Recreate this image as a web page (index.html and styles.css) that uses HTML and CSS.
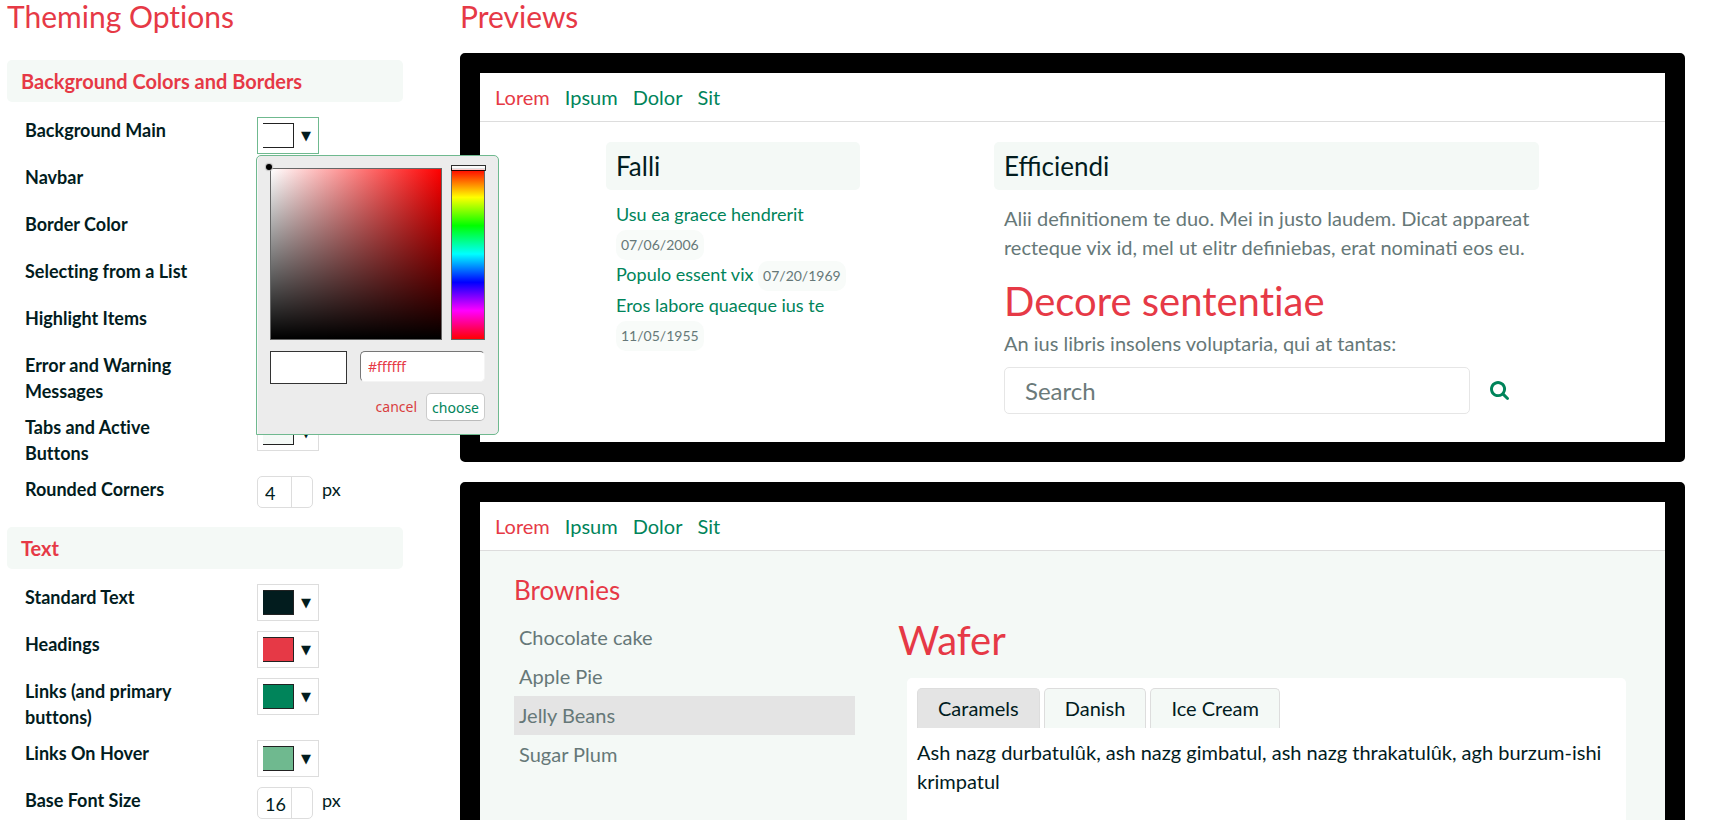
FILE: index.html
```html
<!DOCTYPE html>
<html lang="en">
<head>
<meta charset="utf-8">
<title>Theming Options</title>
<link rel="stylesheet" href="styles.css">
</head>
<body>
<main class="page">
  <section class="options">
    <h1 class="page-title">Theming Options</h1>

    <h2 class="group-title">Background Colors and Borders</h2>
    <div class="group">
      <div class="row">
        <label class="row-label" for="bg-main">Background Main</label>
        <div class="control">
          <button class="swatch is-open" id="bg-main" type="button"><span class="chip chip-white"></span><span class="arrow">▼</span></button>
          <div class="picker">
            <div class="picker-top">
              <div class="shade"><span class="shade-dot"></span></div>
              <div class="hue"><input class="hue-range" type="range" min="0" max="360" value="0" aria-label="Hue"></div>
            </div>
            <div class="picker-values">
              <span class="initial"></span>
              <input class="hex" type="text" value="#ffffff" aria-label="Hex color">
            </div>
            <div class="picker-actions">
              <a class="cancel" href="#">cancel</a>
              <button class="choose" type="button">choose</button>
            </div>
          </div>
        </div>
      </div>
      <div class="row">
        <label class="row-label" for="navbar">Navbar</label>
        <div class="control"><button class="swatch" id="navbar" type="button"><span class="chip chip-white"></span><span class="arrow">▼</span></button></div>
      </div>
      <div class="row">
        <label class="row-label" for="border-color">Border Color</label>
        <div class="control"><button class="swatch" id="border-color" type="button"><span class="chip chip-border"></span><span class="arrow">▼</span></button></div>
      </div>
      <div class="row">
        <label class="row-label" for="selecting">Selecting from a List</label>
        <div class="control"><button class="swatch" id="selecting" type="button"><span class="chip chip-select"></span><span class="arrow">▼</span></button></div>
      </div>
      <div class="row">
        <label class="row-label" for="highlight">Highlight Items</label>
        <div class="control"><button class="swatch" id="highlight" type="button"><span class="chip chip-mint"></span><span class="arrow">▼</span></button></div>
      </div>
      <div class="row">
        <label class="row-label" for="errors">Error and Warning Messages</label>
        <div class="control"><button class="swatch" id="errors" type="button"><span class="chip chip-mint"></span><span class="arrow">▼</span></button></div>
      </div>
      <div class="row">
        <label class="row-label" for="tabs">Tabs and Active Buttons</label>
        <div class="control"><button class="swatch" id="tabs" type="button"><span class="chip chip-mint"></span><span class="arrow">▼</span></button></div>
      </div>
      <div class="row">
        <label class="row-label" for="corners">Rounded Corners</label>
        <div class="control">
          <span class="spinner"><input class="spinner-input" id="corners" type="number" value="4"><span class="spinner-buttons"></span></span>
          <span class="unit">px</span>
        </div>
      </div>
    </div>

    <h2 class="group-title">Text</h2>
    <div class="group">
      <div class="row">
        <label class="row-label" for="text-color">Standard Text</label>
        <div class="control"><button class="swatch" id="text-color" type="button"><span class="chip chip-text"></span><span class="arrow">▼</span></button></div>
      </div>
      <div class="row">
        <label class="row-label" for="headings">Headings</label>
        <div class="control"><button class="swatch" id="headings" type="button"><span class="chip chip-heading"></span><span class="arrow">▼</span></button></div>
      </div>
      <div class="row">
        <label class="row-label" for="links">Links (and primary buttons)</label>
        <div class="control"><button class="swatch" id="links" type="button"><span class="chip chip-link"></span><span class="arrow">▼</span></button></div>
      </div>
      <div class="row">
        <label class="row-label" for="links-hover">Links On Hover</label>
        <div class="control"><button class="swatch" id="links-hover" type="button"><span class="chip chip-hover"></span><span class="arrow">▼</span></button></div>
      </div>
      <div class="row">
        <label class="row-label" for="font-size">Base Font Size</label>
        <div class="control">
          <span class="spinner"><input class="spinner-input" id="font-size" type="number" value="16"><span class="spinner-buttons"></span></span>
          <span class="unit">px</span>
        </div>
      </div>
    </div>
  </section>

  <section class="previews">
    <h1 class="page-title">Previews</h1>

    <article class="preview">
      <nav class="nav">
        <a class="nav-link is-active" href="#">Lorem</a>
        <a class="nav-link" href="#">Ipsum</a>
        <a class="nav-link" href="#">Dolor</a>
        <a class="nav-link" href="#">Sit</a>
      </nav>
      <div class="news">
        <div>
          <h3 class="box-title">Falli</h3>
          <ul class="events">
            <li><a class="event-link" href="#">Usu ea graece hendrerit</a> <span class="badge">07/06/2006</span></li>
            <li><a class="event-link" href="#">Populo essent vix</a> <span class="badge">07/20/1969</span></li>
            <li><a class="event-link" href="#">Eros labore quaeque ius te</a> <span class="badge">11/05/1955</span></li>
          </ul>
        </div>
        <div>
          <h3 class="box-title">Efficiendi</h3>
          <div class="story">
            <p class="copy">Alii definitionem te duo. Mei in justo laudem. Dicat appareat recteque vix id, mel ut elitr definiebas, erat nominati eos eu.</p>
            <h2 class="headline">Decore sententiae</h2>
            <p class="copy">An ius libris insolens voluptaria, qui at tantas:</p>
            <form class="search">
              <input class="search-input" type="text" placeholder="Search" aria-label="Search">
              <button class="search-button" type="button" aria-label="Search">
                <svg class="search-icon" viewBox="0 0 1664 1664" aria-hidden="true"><path fill="currentColor" d="M1152 704q0-185-131.500-316.500T704 256 387.500 387.500 256 704t131.500 316.500T704 1152t316.500-131.500T1152 704zm512 832q0 52-38 90t-90 38q-54 0-90-38l-343-342q-179 124-399 124-143 0-273.500-55.500t-225-150-150-225T0 704t55.500-273.500 150-225 225-150T704 0t273.500 55.500 225 150 150 225T1408 704q0 220-124 399l343 343q37 37 37 90z"/></svg>
              </button>
            </form>
          </div>
        </div>
      </div>
    </article>

    <article class="preview preview-tinted">
      <nav class="nav">
        <a class="nav-link is-active" href="#">Lorem</a>
        <a class="nav-link" href="#">Ipsum</a>
        <a class="nav-link" href="#">Dolor</a>
        <a class="nav-link" href="#">Sit</a>
      </nav>
      <div class="sweets">
        <div>
          <h3 class="list-title">Brownies</h3>
          <ul class="list">
            <li class="list-item">Chocolate cake</li>
            <li class="list-item">Apple Pie</li>
            <li class="list-item is-selected">Jelly Beans</li>
            <li class="list-item">Sugar Plum</li>
          </ul>
        </div>
        <div class="detail">
          <h2 class="headline">Wafer</h2>
          <div class="card">
            <div class="tabs">
              <button class="tab is-selected" type="button">Caramels</button>
              <button class="tab" type="button">Danish</button>
              <button class="tab" type="button">Ice Cream</button>
            </div>
            <p class="card-copy">Ash nazg durbatulûk, ash nazg gimbatul, ash nazg thrakatulûk, agh burzum-ishi krimpatul</p>
          </div>
        </div>
      </div>
    </article>
  </section>
</main>
</body>
</html>
```

FILE: styles.css
```css
:root {
  --text: #021c1e;
  --heading: #e63946;
  --link: #00845a;
  --hover: #6fb98f;
  --muted: #667878;
  --mint: #f4f9f6;
  --border: #dddddd;
  --selected: #e4e4e4;
}

* { box-sizing: border-box; }

body {
  margin: 0;
  background: #fff;
  color: var(--text);
  font-family: Lato, sans-serif;
  font-size: 20px;
  line-height: 29px;
}

h1, h2, h3, p, ul { margin: 0; padding: 0; font-weight: 400; }
ul { list-style: none; }
a { color: var(--link); text-decoration: none; }
button, input { font-family: inherit; color: inherit; margin: 0; }

.page {
  display: grid;
  grid-template-columns: 396px minmax(0, 1fr);
  column-gap: 57px;
  padding: 0 37px 0 7px;
}

.page-title {
  color: var(--heading);
  font-size: 30px;
  line-height: 32px;
}

/* Options column */
.options { font-variant-ligatures: no-common-ligatures; }
.options .page-title { margin-bottom: 28px; }

.group-title {
  padding: 6px 14px;
  border-radius: 5px;
  background: var(--mint);
  color: var(--heading);
  font-size: 20px;
  font-weight: 700;
  line-height: 30px;
}

.group { padding: 15px 0 9px 18px; }

.row {
  display: grid;
  grid-template-columns: 171px 1fr;
  column-gap: 61px;
  align-items: start;
  padding-bottom: 10px;
}

.row-label {
  font-size: 18px;
  font-weight: 700;
  line-height: 26px;
}

.control {
  position: relative;
  display: flex;
  gap: 9px;
}

.swatch {
  display: flex;
  align-items: center;
  gap: 7px;
  width: 62px;
  height: 37px;
  padding: 0 5px;
  border: 1px solid var(--border);
  background: #fff;
}
.swatch.is-open { border-color: var(--hover); }

.chip {
  width: 31px;
  height: 25px;
  border: 1px solid #222;
  border-left: 0;
}
.chip-white { background: #fff; }
.chip-border { background: var(--border); }
.chip-select { background: var(--selected); }
.chip-mint { background: var(--mint); }
.chip-text { background: var(--text); }
.chip-heading { background: var(--heading); }
.chip-link { background: var(--link); }
.chip-hover { background: var(--hover); }

.arrow {
  font-family: "DejaVu Sans", sans-serif;
  font-size: 13px;
  line-height: 16px;
}

.spinner {
  display: flex;
  width: 56px;
  height: 32px;
  border: 1px solid var(--border);
  border-radius: 5px;
}
.spinner-input {
  width: 33px;
  padding: 2px 0 0 7px;
  border: 0;
  background: none;
  font-size: 18px;
  appearance: textfield;
}
.spinner-input::-webkit-inner-spin-button { appearance: none; }
.spinner-buttons { flex: 1; border-left: 1px solid var(--border); }
.unit { font-size: 18px; line-height: 26px; }

/* Color picker */
.picker {
  position: absolute;
  z-index: 10;
  top: 38px;
  left: -1px;
  width: 243px;
  padding: 12px 13px 13px;
  border: 1px solid var(--hover);
  border-radius: 5px 5px 5px 0;
  background: #ececec;
  box-shadow: inset 1px 0 0 #f8f8f8;
}
.picker-top { display: flex; gap: 9px; }

.shade {
  position: relative;
  width: 172px;
  height: 172px;
  border: 1px solid #666;
  background:
    linear-gradient(to top, #000, transparent),
    linear-gradient(to right, #fff, #f00);
}
.shade-dot {
  position: absolute;
  top: -5px;
  left: -5px;
  width: 6px;
  height: 6px;
  border-radius: 50%;
  background: #000;
  box-shadow: 0 0 1px 1px #bbb;
}

.hue {
  position: relative;
  width: 34px;
  height: 172px;
  border: 1px solid #666;
  background: linear-gradient(#f00, #ff0, #0f0, #0ff, #00f, #f0f, #f00);
}
.hue-range {
  position: absolute;
  top: -4px;
  left: -1px;
  width: 35px;
  height: 178px;
  background: none;
  appearance: none;
  writing-mode: vertical-lr;
}
.hue-range::-webkit-slider-thumb {
  width: 35px;
  height: 6px;
  border: 1px solid #000;
  background: #fff;
  opacity: .8;
  appearance: none;
}

.picker-values {
  display: flex;
  gap: 13px;
  padding-top: 11px;
}
.initial {
  width: 77px;
  height: 33px;
  border: 1px solid #333;
  background: #fff;
}
.hex {
  width: 125px;
  height: 31px;
  padding: 0 7px;
  border: 1px solid;
  border-color: #767676 #f4f4f4 #f4f4f4 #767676;
  border-radius: 5px;
  background: #fff;
  color: var(--heading);
  font-family: "Noto Sans", sans-serif;
  font-size: 14px;
}

.picker-actions {
  display: flex;
  justify-content: flex-end;
  align-items: center;
  gap: 9px;
  padding-top: 9px;
  font-family: "Noto Sans", sans-serif;
  font-size: 14px;
  line-height: 28px;
}
.cancel { color: #d93f3f; }
.choose {
  height: 28px;
  padding: 0 5px;
  border: 1px solid #ccc;
  border-bottom-color: #bbb;
  border-radius: 5px;
  background: #fff;
  color: var(--link);
  font-size: 14px;
}

/* Previews column */
.previews .page-title { margin: 0 0 21px; }

.preview {
  margin-bottom: 20px;
  border: 20px solid #000;
  border-radius: 5px;
  background: #fff;
}
.preview-tinted { background: var(--mint); }

.nav {
  display: flex;
  gap: 15px;
  padding: 10px 15px 9px;
  border-bottom: 1px solid var(--border);
  background: #fff;
}
.nav-link.is-active { color: var(--heading); }

.news {
  display: grid;
  grid-template-columns: 254fr 545fr;
  column-gap: 134px;
  padding: 20px 126px 28px;
}

.box-title {
  padding: 8px 10px;
  border-radius: 5px;
  background: var(--mint);
  font-size: 26px;
  line-height: 32px;
}

.events { padding: 10px 10px 0; font-size: 18px; line-height: 29px; }
.badge {
  display: inline-block;
  padding: 0 5px;
  border-radius: 10px;
  background: #f8fbf9;
  color: var(--muted);
  font-size: 14px;
  line-height: 30px;
}

.story { padding: 14px 0 0 10px; }
.copy { color: var(--muted); }

.headline {
  color: var(--heading);
  font-size: 40px;
  font-variant-ligatures: no-common-ligatures;
  line-height: 44px;
}
.story .headline { margin: 17px 0 6px; }

.search { display: flex; margin: 9px 10px 0 0; }
.search-input {
  flex: 1;
  min-width: 0;
  height: 47px;
  padding: 0 20px;
  border: 1px solid #e6e6e6;
  border-radius: 5px;
  background: #fff;
  font-size: 24px;
}
.search-input::placeholder { color: #6b7a7a; }
.search-button {
  display: flex;
  align-items: center;
  padding: 0 20px;
  border: 0;
  background: none;
  color: var(--link);
}
.search-icon { width: 19px; height: 19px; }

.sweets {
  display: grid;
  grid-template-columns: 341fr 728fr;
  column-gap: 43px;
  padding: 24px 39px 60px 34px;
}
.list-title {
  margin-bottom: 12px;
  color: var(--heading);
  font-size: 26px;
  line-height: 31px;
}
.list-item { padding: 5px; color: var(--muted); }
.list-item.is-selected { background: var(--selected); }

.detail { padding-top: 43px; }
.card {
  margin: 16px 0 0 9px;
  padding: 10px 10px 60px;
  border-radius: 5px;
  background: #fff;
}
.tabs { display: flex; gap: 4px; margin-bottom: 10px; }
.tab {
  padding: 5px 20px;
  border: 1px solid var(--border);
  border-bottom: 0;
  border-radius: 5px 5px 0 0;
  background: var(--mint);
  font-size: 20px;
  line-height: 29px;
}
.tab.is-selected { background: var(--selected); }
```
